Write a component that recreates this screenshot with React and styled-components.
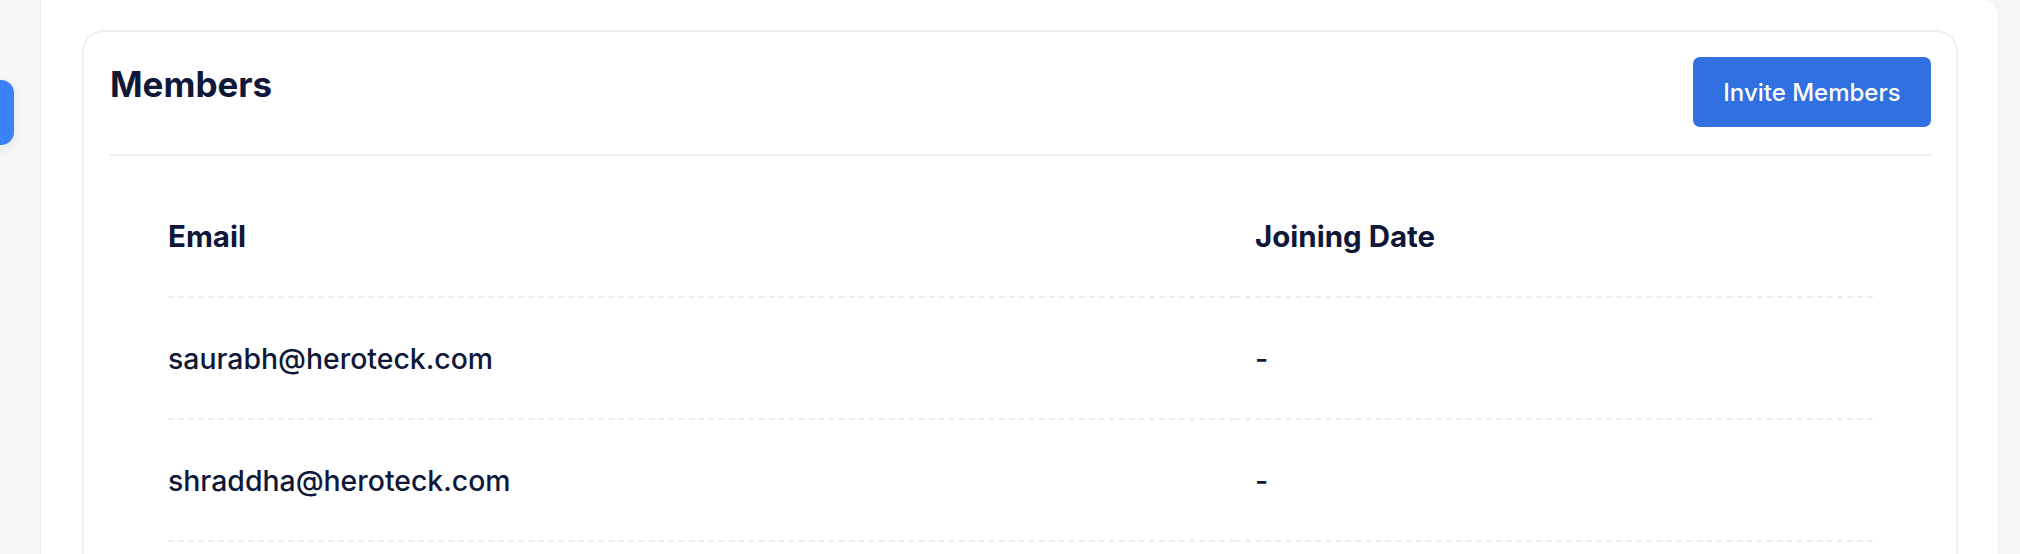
import React from 'react'
import styled, { createGlobalStyle } from 'styled-components'

const GlobalStyle = createGlobalStyle`
  html, body {
    margin: 0;
    padding: 0;
    background: #f7f7f7;
    font-family: Inter, 'Noto Sans', sans-serif;
    overflow: hidden;
  }
`

const Page = styled.div`
  display: flex;
  height: 554px;
  background: #f7f7f7;
`

const SideRail = styled.div`
  position: relative;
  width: 40px;
  flex-shrink: 0;
  border-right: 1px solid #ededed;
`

const RailToggle = styled.div`
  position: absolute;
  left: -12px;
  top: 80px;
  width: 26px;
  height: 65px;
  border-radius: 13px;
  background: #3b82f6;
  box-shadow: 0 4px 14px rgba(0, 0, 0, 0.08);
`

const Panel = styled.main`
  flex: 1;
  background: #ffffff;
  padding: 30px 40px 0 41px;
  border-top-right-radius: 16px;
  box-shadow: 1px 0 0 #efefef;
`

const Card = styled.section`
  border: 2px solid #f0f0f0;
  border-bottom: none;
  border-radius: 22px 22px 0 0;
  height: 600px;
`

const CardHeader = styled.header`
  display: flex;
  justify-content: space-between;
  align-items: flex-start;
  margin: 0 25px 0 26px;
  padding: 25px 0 27px;
  border-bottom: 2px solid #efefef;
`

const Title = styled.h2`
  margin: 0;
  font-size: 35px;
  line-height: 54px;
  font-weight: 700;
  color: #0f1838;
`

const Button = styled.button`
  width: 238px;
  height: 70px;
  border: none;
  border-radius: 7px;
  background: #3170e0;
  color: #ffffff;
  font-family: Inter, sans-serif;
  font-size: 24px;
  font-weight: 500;
  cursor: pointer;
`

const Table = styled.div`
  display: grid;
  grid-template-columns: 1067px 638px;
  margin: 20px 83px 0 84px;
`

const Cell = styled.div`
  height: 122px;
  box-sizing: border-box;
  display: flex;
  align-items: center;
  padding-left: ${({ $col }) => ($col === 0 ? '0' : '20px')};
  border-bottom: 2px dashed #ededed;
  font-size: ${({ $head }) => ($head ? '29.5px' : '28.4px')};
  font-weight: ${({ $head }) => ($head ? 700 : 500)};
  color: #0f1838;
`

const members = [
  { email: 'saurabh@heroteck.com', joined: '-' },
  { email: 'shraddha@heroteck.com', joined: '-' }
]

export default function App () {
  return (
    <>
      <GlobalStyle />
      <Page>
        <SideRail>
          <RailToggle />
        </SideRail>
        <Panel>
          <Card>
            <CardHeader>
              <Title>Members</Title>
              <Button>Invite Members</Button>
            </CardHeader>
            <Table>
              <Cell $col={0} $head>Email</Cell>
              <Cell $col={1} $head>Joining Date</Cell>
              {members.map(m => (
                <React.Fragment key={m.email}>
                  <Cell $col={0}>{m.email}</Cell>
                  <Cell $col={1}>{m.joined}</Cell>
                </React.Fragment>
              ))}
            </Table>
          </Card>
        </Panel>
        <div style={{ width: 22 }} />
      </Page>
    </>
  )
}
